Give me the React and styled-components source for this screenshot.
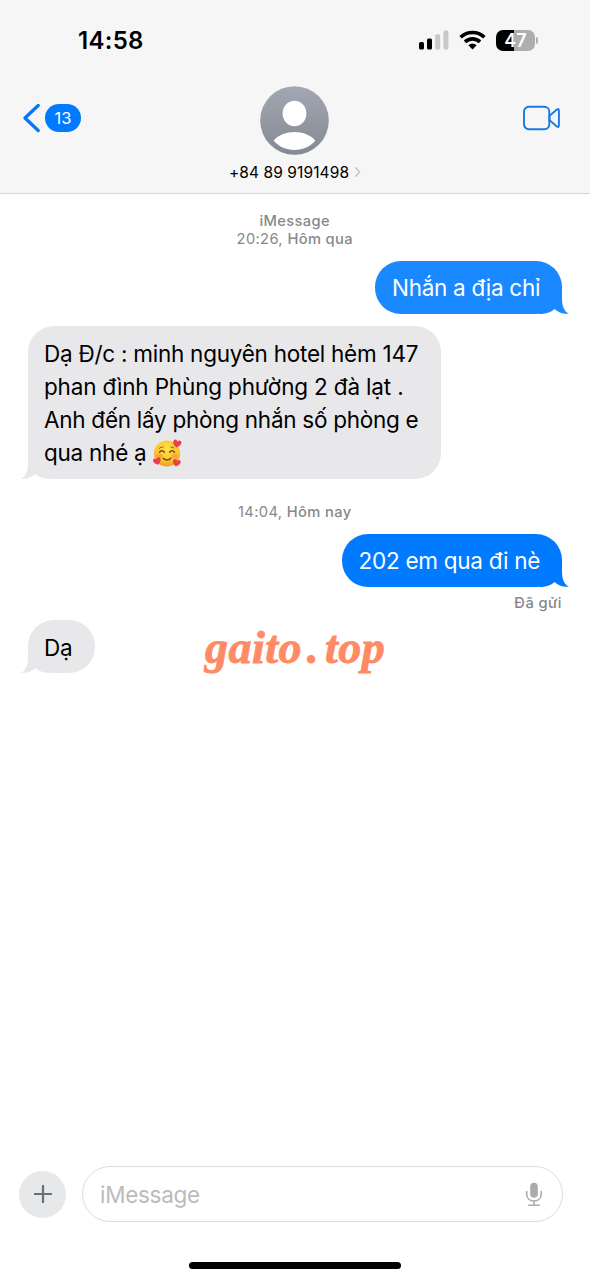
import React from "react";
import styled, { createGlobalStyle } from "styled-components";

const GlobalStyle = createGlobalStyle`
  * {
    box-sizing: border-box;
  }

  body {
    margin: 0;
    background: #fff;
    font-family: Inter, "Liberation Sans", sans-serif;
    color: #000;
  }

  svg {
    display: block;
    flex: none;
  }

  p {
    margin: 0;
  }
`;

const Screen = styled.div`
  position: relative;
  display: flex;
  flex-direction: column;
  width: 590px;
  height: 1280px;
  overflow: hidden;
  background: #fff;
`;

const Header = styled.header`
  height: 194px;
  background: #f6f6f6;
  border-bottom: 1px solid #d6d6d6;
`;

const StatusBar = styled.div`
  display: flex;
  justify-content: space-between;
  align-items: center;
  height: 80px;
  padding: 0 52px 0 78px;
`;

const Clock = styled.span`
  font-size: 24px;
  font-weight: 600;
  letter-spacing: 0.3px;
`;

const StatusIcons = styled.div`
  display: flex;
  align-items: center;
  gap: 10px;
`;

const Battery = styled.div`
  display: flex;
  align-items: center;
  gap: 1px;

  &::after {
    content: "";
    width: 2px;
    height: 7px;
    border-radius: 0 2px 2px 0;
    background: #b0b0b0;
  }
`;

const BatteryLevel = styled.div`
  width: 39px;
  height: 21px;
  border-radius: 7px;
  background: linear-gradient(
    90deg,
    #000 ${(props) => props.$level}%,
    #aeaeae ${(props) => props.$level}%
  );
  color: #fff;
  font-size: 18px;
  font-weight: 600;
  line-height: 21px;
  text-align: center;
`;

const NavBar = styled.div`
  display: grid;
  grid-template-columns: 1fr auto 1fr;
  padding: 6px 30px 0 22px;
`;

const BackButton = styled.div`
  display: flex;
  align-items: center;
  gap: 4px;
  height: 64px;
`;

const UnreadBadge = styled.span`
  width: 36px;
  height: 28px;
  border-radius: 14px;
  background: #007aff;
  color: #fff;
  font-size: 16.5px;
  line-height: 28px;
  text-align: center;
`;

const Contact = styled.div`
  display: flex;
  flex-direction: column;
  align-items: center;
  gap: 7px;
  margin-left: 8px;
`;

const ContactName = styled.div`
  display: flex;
  align-items: center;
  gap: 5px;
  height: 20px;
  font-size: 15.5px;
  letter-spacing: 0.1px;
`;

const VideoButton = styled.div`
  display: flex;
  align-items: center;
  justify-content: flex-end;
  height: 64px;
`;

const Messages = styled.main`
  display: flex;
  flex-direction: column;
  flex: 1;
  padding: 18px 28px 0 27.5px;
`;

const Stamp = styled.div`
  margin-bottom: ${(props) => props.$bottom}px;
  color: #88888c;
  font-size: 14.7px;
  line-height: 18px;
  letter-spacing: 0.35px;
  text-align: center;

  b {
    font-weight: 500;
  }
`;

const Bubble = styled.div`
  position: relative;
  isolation: isolate;
  align-self: ${(props) => (props.$mine ? "flex-end" : "flex-start")};
  width: ${(props) => props.$width}px;
  margin-bottom: ${(props) => props.$bottom}px;
  padding: ${(props) => (props.$mine ? "11px 0 9.5px 17px" : "11.8px 0 8.7px 16.5px")};
  border-radius: 26px;
  background: ${(props) => props.$color};
  color: ${(props) => (props.$mine ? "#fff" : "#000")};
  font-size: 22.5px;
  line-height: 32.9px;
  white-space: nowrap;
`;

const Line = styled.p`
  display: flex;
  align-items: center;
  gap: 7px;
  letter-spacing: ${(props) => props.$spacing || 0}px;
`;

const Tail = styled.svg`
  position: absolute;
  z-index: -1;
  bottom: 0;
  ${(props) => (props.$mine ? "right: -7px;" : "left: -7px; transform: scaleX(-1);")}
`;

const Receipt = styled.div`
  margin-bottom: 8px;
  align-self: flex-end;
  color: #86868a;
  font-size: 14.7px;
  font-weight: 500;
  line-height: 18px;
  letter-spacing: 0.45px;
`;

const Watermark = styled.div`
  position: absolute;
  top: 621px;
  left: 205px;
  display: flex;
  color: #ff8b66;
  font-family: "Liberation Serif", serif;
  font-size: 46px;
  font-style: italic;
  font-weight: 700;
  line-height: 54px;
  letter-spacing: 0.5px;
  white-space: nowrap;
  -webkit-text-stroke: 0.9px #ff8b66;
`;

const Dot = styled.span`
  padding: 0 6px 0 5px;
`;

const Composer = styled.footer`
  display: flex;
  align-items: center;
  gap: 16px;
  height: 56px;
  margin-bottom: 40px;
  padding: 0 27px 0 19px;
`;

const PlusButton = styled.div`
  display: flex;
  align-items: center;
  justify-content: center;
  width: 47px;
  height: 47px;
  border-radius: 50%;
  background: #e6e8ea;
`;

const Field = styled.div`
  display: flex;
  align-items: center;
  justify-content: space-between;
  flex: 1;
  height: 56px;
  padding: 0 19px 0 17px;
  border: 1.5px solid #dcdcde;
  border-radius: 28px;
  color: #bbbbbd;
  font-size: 22.5px;
  letter-spacing: -0.3px;
`;

const HomeIndicator = styled.div`
  align-self: center;
  width: 212px;
  height: 7px;
  margin-bottom: 11px;
  border-radius: 4px;
  background: #000;
`;

const SignalIcon = () => (
  <svg width="31" height="20" viewBox="0 0 31 20">
    <rect x="1" y="12" width="5" height="7.5" rx="1.6" fill="#000" />
    <rect x="9" y="8.5" width="5" height="11" rx="1.6" fill="#000" />
    <rect x="17.2" y="4.3" width="5" height="15.2" rx="1.6" fill="#c8c8c8" />
    <rect x="25.4" y="0.5" width="5" height="19" rx="1.6" fill="#c8c8c8" />
  </svg>
);

const WifiIcon = () => (
  <svg width="27" height="20" viewBox="0 0 27 20">
    <g fill="none" stroke="#000" strokeWidth="3.6">
      <path d="M1.6 7.3a17 17 0 0 1 23.8 0" />
      <path d="M6 11.9a10.8 10.8 0 0 1 15 0" />
    </g>
    <path d="M9.4 15.2a6 6 0 0 1 8.2 0l-4.1 4.3z" fill="#000" />
  </svg>
);

const BackIcon = () => (
  <svg width="19" height="30" viewBox="0 0 19 30">
    <path
      d="M16.2 2.5 3 15l13.2 12.5"
      fill="none"
      stroke="#0a78f5"
      strokeWidth="3.4"
      strokeLinecap="round"
      strokeLinejoin="round"
    />
  </svg>
);

const Avatar = () => (
  <svg width="69" height="69" viewBox="0 0 69 69">
    <defs>
      <linearGradient id="avatar" x1="0" y1="0" x2="0" y2="1">
        <stop offset="0" stopColor="#a2a7b3" />
        <stop offset="1" stopColor="#858993" />
      </linearGradient>
    </defs>
    <circle cx="34.5" cy="34.5" r="34.3" fill="url(#avatar)" />
    <ellipse cx="34.5" cy="27.5" rx="11.9" ry="12.8" fill="#fff" />
    <path
      d="M13.7 54.5C18.5 49 26 46 34.5 46s16 3 20.8 8.5C50.5 60.5 43 64 34.5 64s-16-3.5-20.8-9.5z"
      fill="#fff"
    />
  </svg>
);

const ChevronIcon = () => (
  <svg width="7" height="12" viewBox="0 0 7 12">
    <path d="M1.2 1.2 5.6 6 1.2 10.8" fill="none" stroke="#c4c4c8" strokeWidth="1.4" />
  </svg>
);

const VideoIcon = () => (
  <svg width="38" height="26" viewBox="0 0 38 26">
    <g fill="none" stroke="#1878e6" strokeWidth="1.9" strokeLinejoin="round">
      <rect x="2" y="1.8" width="25.3" height="22.4" rx="5" />
      <path d="M27.5 10.9 34.6 4.7q2.3-1.7 2.3.8v15q0 2.5-2.3.8l-7.1-6.2z" />
    </g>
  </svg>
);

const BubbleTail = ({ mine, color }) => (
  <Tail $mine={mine} width="30" height="26" viewBox="0 0 30 26">
    <path d="M23 0v10c0 8 2 13.5 7 15.6-5.5.9-10.5-.8-14.5-4.6C12 24.5 7 26 0 26V0z" fill={color} />
  </Tail>
);

const HeartsFace = () => (
  <svg width="29" height="29" viewBox="0 0 29 29">
    <defs>
      <radialGradient id="face" cx="0.5" cy="0.35" r="0.65">
        <stop offset="0" stopColor="#ffe04a" />
        <stop offset="0.65" stopColor="#fcc72d" />
        <stop offset="1" stopColor="#f2982a" />
      </radialGradient>
      <path
        id="heart"
        d="M0 3.8C-3.3 1.5-4.6-.3-4-2.3-3.3-4.3-.9-4.3 0-2.2.9-4.3 3.3-4.3 4-2.3 4.6-.3 3.3 1.5 0 3.8z"
      />
    </defs>
    <circle cx="14" cy="14.5" r="13" fill="url(#face)" />
    <ellipse cx="6.3" cy="17" rx="3" ry="2.2" fill="#f58a3c" opacity="0.55" />
    <ellipse cx="21.5" cy="17" rx="3" ry="2.2" fill="#f58a3c" opacity="0.55" />
    <g fill="none" stroke="#7a4a12" strokeWidth="1.5" strokeLinecap="round">
      <path d="M6.5 13.3c1-2 3.800-2 4.800 0" />
      <path d="M16.7 13.3c1-2 3.800-2 4.800 0" />
      <path d="M10.2 19.3c2 2.2 5.600 2.2 7.600 0" />
      <path d="M6.5 9.2c1-.9 2.3-1.3 3.6-1.2M18 8c1 0 2 .2 2.8.8" strokeWidth="0.9" />
    </g>
    <g fill="#ea3f4b">
      <use href="#heart" transform="translate(24 4.8) rotate(12)" />
      <use href="#heart" transform="translate(4.3 22.3) rotate(-18) scale(0.95)" />
      <use href="#heart" transform="translate(23.5 24) rotate(14) scale(0.95)" />
    </g>
  </svg>
);

const PlusIcon = () => (
  <svg width="18" height="18" viewBox="0 0 18 18">
    <path d="M9 .8v16.4M.8 9h16.4" stroke="#6c6e70" strokeWidth="2.2" strokeLinecap="round" />
  </svg>
);

const MicIcon = () => (
  <svg width="18" height="25" viewBox="0 0 18 25">
    <rect x="5.2" y="0.8" width="7.6" height="15" rx="3.8" fill="#ababad" />
    <path
      d="M1.7 9.5v2.2c0 4.4 2.9 7.3 7.3 7.3s7.3-2.9 7.3-7.3V9.5M9 19v4M3.8 23.3h10.4"
      fill="none"
      stroke="#ababad"
      strokeWidth="1.6"
      strokeLinecap="round"
    />
  </svg>
);

const App = () => {
  return (
    <>
      <GlobalStyle />
      <Screen>
        <Header>
          <StatusBar>
            <Clock>14:58</Clock>
            <StatusIcons>
              <SignalIcon />
              <WifiIcon />
              <Battery>
                <BatteryLevel $level={47}>47</BatteryLevel>
              </Battery>
            </StatusIcons>
          </StatusBar>
          <NavBar>
            <BackButton>
              <BackIcon />
              <UnreadBadge>13</UnreadBadge>
            </BackButton>
            <Contact>
              <Avatar />
              <ContactName>
                +84 89 9191498
                <ChevronIcon />
              </ContactName>
            </Contact>
            <VideoButton>
              <VideoIcon />
            </VideoButton>
          </NavBar>
        </Header>

        <Messages>
          <Stamp $bottom={12.5}>
            <b>iMessage</b>
            <br />
            20:26, <b>Hôm qua</b>
          </Stamp>

          <Bubble $mine $width={187} $color="#1a88ff" $bottom={12.5}>
            <Line $spacing={-0.28}>Nhắn a địa chỉ</Line>
            <BubbleTail mine color="#1a88ff" />
          </Bubble>

          <Bubble $width={413.5} $color="#e8e8ea" $bottom={24}>
            <Line $spacing={-0.25}>Dạ Đ/c : minh nguyên hotel hẻm 147</Line>
            <Line $spacing={-0.16}>phan đình Phùng phường 2 đà lạt .</Line>
            <Line $spacing={-0.27}>Anh đến lấy phòng nhắn số phòng e</Line>
            <Line $spacing={-0.25}>
              qua nhé ạ <HeartsFace />
            </Line>
            <BubbleTail color="#e8e8ea" />
          </Bubble>

          <Stamp $bottom={13}>
            14:04, <b>Hôm nay</b>
          </Stamp>

          <Bubble $mine $width={220.5} $color="#007aff" $bottom={7}>
            <Line $spacing={-0.27}>202 em qua đi nè</Line>
            <BubbleTail mine color="#007aff" />
          </Bubble>
          <Receipt>Đã gửi</Receipt>

          <Bubble $width={67.5} $color="#e8e8ea" $bottom={0}>
            <Line $spacing={-0.3}>Dạ</Line>
            <BubbleTail color="#e8e8ea" />
          </Bubble>
        </Messages>

        <Watermark>
          gaito<Dot>.</Dot>top
        </Watermark>

        <Composer>
          <PlusButton>
            <PlusIcon />
          </PlusButton>
          <Field>
            iMessage
            <MicIcon />
          </Field>
        </Composer>
        <HomeIndicator />
      </Screen>
    </>
  );
};

export default App;
